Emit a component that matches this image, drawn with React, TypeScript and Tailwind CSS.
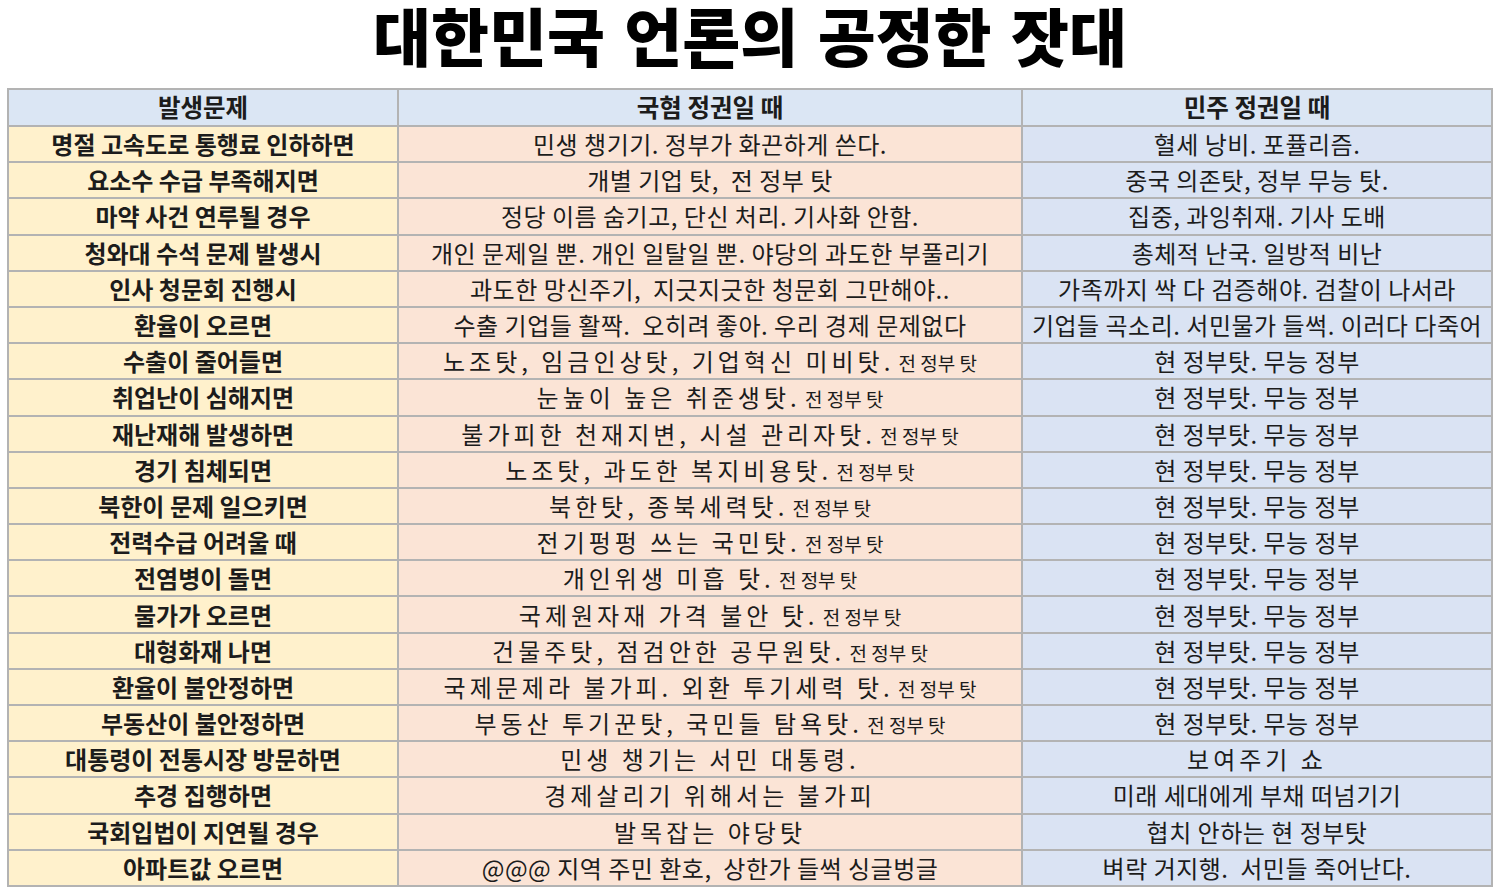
type Seg = { t: string; w?: boolean; s?: boolean };
type Row = { q: string; a: Seg[]; b: Seg[] };

const FONT = { fontFamily: '"Noto Sans CJK KR", "Noto Sans", sans-serif' };

const n = (t: string): Seg[] => [{ t }];
const wt = (t: string): Seg[] => [{ t, w: true }];
const prev = (t: string): Seg[] => [{ t, w: true }, { t: " 전 정부 탓", s: true }];
const cur = n("현 정부탓. 무능 정부");

const rows: Row[] = [
  { q: "명절 고속도로 통행료 인하하면", a: n("민생 챙기기. 정부가 화끈하게 쓴다."), b: n("혈세 낭비. 포퓰리즘.") },
  { q: "요소수 수급 부족해지면", a: n("개별 기업 탓,  전 정부 탓"), b: n("중국 의존탓, 정부 무능 탓.") },
  { q: "마약 사건 연루될 경우", a: n("정당 이름 숨기고, 단신 처리. 기사화 안함."), b: n("집중, 과잉취재. 기사 도배") },
  { q: "청와대 수석 문제 발생시", a: n("개인 문제일 뿐. 개인 일탈일 뿐. 야당의 과도한 부풀리기"), b: n("총체적 난국. 일방적 비난") },
  { q: "인사 청문회 진행시", a: n("과도한 망신주기,  지긋지긋한 청문회 그만해야.."), b: n("가족까지 싹 다 검증해야. 검찰이 나서라") },
  { q: "환율이 오르면", a: n("수출 기업들 활짝.  오히려 좋아. 우리 경제 문제없다"), b: n("기업들 곡소리. 서민물가 들썩. 이러다 다죽어") },
  { q: "수출이 줄어들면", a: prev("노조탓, 임금인상탓, 기업혁신 미비탓."), b: cur },
  { q: "취업난이 심해지면", a: prev("눈높이 높은 취준생탓."), b: cur },
  { q: "재난재해 발생하면", a: prev("불가피한 천재지변, 시설 관리자탓."), b: cur },
  { q: "경기 침체되면", a: prev("노조탓, 과도한 복지비용탓."), b: cur },
  { q: "북한이 문제 일으키면", a: prev("북한탓, 종북세력탓."), b: cur },
  { q: "전력수급 어려울 때", a: prev("전기펑펑 쓰는 국민탓."), b: cur },
  { q: "전염병이 돌면", a: prev("개인위생 미흡 탓."), b: cur },
  { q: "물가가 오르면", a: prev("국제원자재 가격 불안 탓."), b: cur },
  { q: "대형화재 나면", a: prev("건물주탓, 점검안한 공무원탓."), b: cur },
  { q: "환율이 불안정하면", a: prev("국제문제라 불가피. 외환 투기세력 탓."), b: cur },
  { q: "부동산이 불안정하면", a: prev("부동산 투기꾼탓, 국민들 탐욕탓."), b: cur },
  { q: "대통령이 전통시장 방문하면", a: wt("민생 챙기는 서민 대통령."), b: wt("보여주기 쇼") },
  { q: "추경 집행하면", a: wt("경제살리기 위해서는 불가피"), b: n("미래 세대에게 부채 떠넘기기") },
  { q: "국회입법이 지연될 경우", a: wt("발목잡는 야당탓"), b: n("협치 안하는 현 정부탓") },
  { q: "아파트값 오르면", a: n("@@@ 지역 주민 환호,  상한가 들썩 싱글벙글"), b: n("벼락 거지행.  서민들 죽어난다.") },
];

function Segs({ segs }: { segs: Seg[] }) {
  return (
    <>
      {segs.map((s, i) => (
        <span
          key={i}
          className={s.w ? "tracking-[4px]" : s.s ? "text-[19px] tracking-normal" : ""}
        >
          {s.t}
        </span>
      ))}
    </>
  );
}

export default function App() {
  return (
    <div className="w-[1500px] h-[893px] bg-white overflow-hidden text-[#1c1c1c]" style={FONT}>
      <div className="h-[88px] flex justify-center pt-[2px]">
        <h1 className="text-[63px] font-black text-black leading-[64px] [word-spacing:5px]">
          대한민국 언론의 공정한 잣대
        </h1>
      </div>

      <table className="ml-[7px] w-[1484px] table-fixed border-collapse whitespace-pre">
        <colgroup>
          <col className="w-[390px]" />
          <col className="w-[624px]" />
          <col className="w-[470px]" />
        </colgroup>
        <thead>
          <tr className="bg-[#dbe6f4]">
            <th className="h-[37px] border-2 border-[#b3b3b3] text-[24.5px] font-bold leading-none text-center">발생문제</th>
            <th className="h-[37px] border-2 border-[#b3b3b3] text-[24.5px] font-bold leading-none text-center">국혐 정권일 때</th>
            <th className="h-[37px] border-2 border-[#b3b3b3] text-[24.5px] font-bold leading-none text-center">민주 정권일 때</th>
          </tr>
        </thead>
        <tbody>
          {rows.map((r, i) => (
            <tr key={i}>
              <td className="h-[36.2px] border-2 border-[#b3b3b3] bg-[#fff1cc] text-[24px] font-bold leading-none text-center">
                {r.q}
              </td>
              <td className="h-[36.2px] border-2 border-[#b3b3b3] bg-[#fbe4d6] text-[24px] tracking-[0.5px] leading-none text-center">
                <Segs segs={r.a} />
              </td>
              <td className="h-[36.2px] border-2 border-[#b3b3b3] bg-[#dae3f3] text-[24px] tracking-[0.5px] leading-none text-center">
                <Segs segs={r.b} />
              </td>
            </tr>
          ))}
        </tbody>
      </table>
    </div>
  );
}
